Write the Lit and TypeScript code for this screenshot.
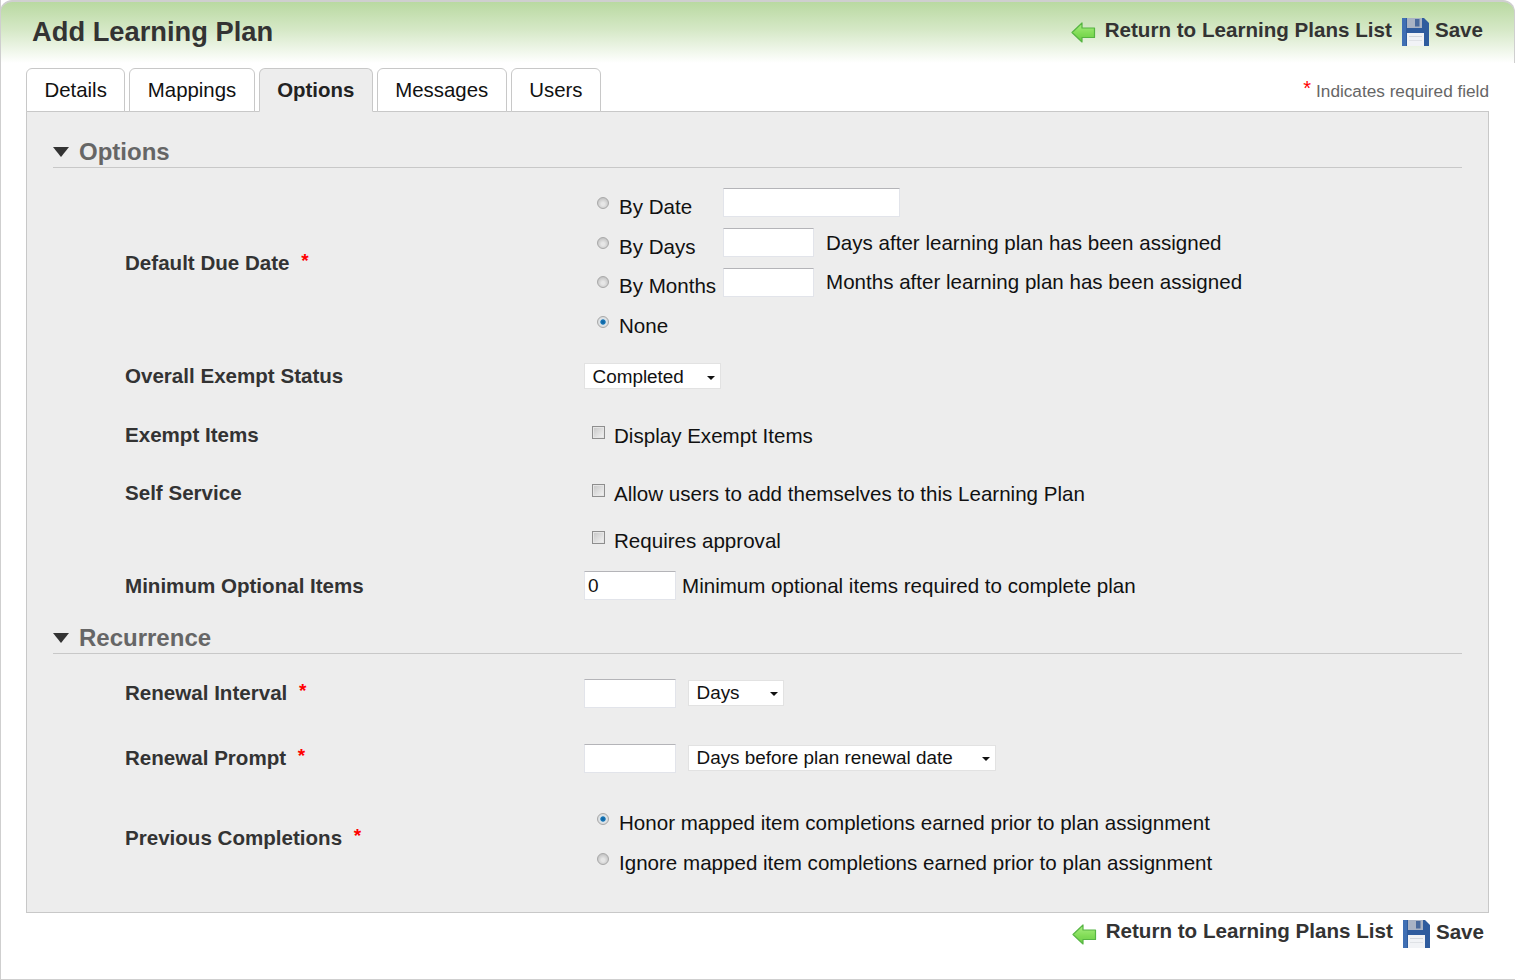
import { LitElement, html, css, svg } from "lit";
import { customElement } from "lit/decorators.js";

let uid = 0;
const arrowIcon = () => {
  const id = `ag${uid++}`;
  return html`<svg class="arrow" width="25" height="21" viewBox="0 0 25 21">
    ${svg`<defs><linearGradient id=${id} x1="0" y1="0" x2="0" y2="1">
      <stop offset="0" stop-color="#a8ee7c"/><stop offset="0.55" stop-color="#7ddc50"/><stop offset="1" stop-color="#62c83c"/>
    </linearGradient></defs>
    <path d="M1 10.5 L11 1 V6 H23.5 V15.5 H11 V20 Z" fill=${`url(#${id})`} stroke="#4fb23a" stroke-width="1.2" stroke-linejoin="round" opacity="0.95"/>`}
  </svg>`;
};
const saveIcon = () => html`<svg class="floppy" width="27" height="28" viewBox="0 0 27 28">
  <path d="M0 0 H22 L27 5 V28 H0 Z" fill="#2f5c9e"/>
  <path d="M0 0 H4 V28 H0 Z" fill="#3f6fb4"/>
  <rect x="5" y="0" width="15" height="10" fill="#a9b3c4"/>
  <rect x="13" y="1" width="4.5" height="7.5" fill="#4a6a9c"/>
  <rect x="5" y="15" width="17" height="13" fill="#f1f3f6"/>
  <rect x="7" y="18" width="13" height="1" fill="#d3d7dd"/>
  <rect x="7" y="22" width="13" height="1" fill="#dfe2e6"/>
</svg>`;

@customElement("app-root")
export class AppRoot extends LitElement {
  static styles = css`
    :host {
      display: block;
      width: 1515px;
      height: 980px;
      font-family: "Liberation Sans", Arial, sans-serif;
      font-size: 20.57px;
      color: #111;
      background: #fff;
    }
    * { box-sizing: border-box; }
    .frame {
      height: 980px;
      border-left: 1px solid #cfcfcf;
      border-bottom: 1px solid #cfcfcf;
      display: flex;
      flex-direction: column;
    }
    .head {
      height: 63px;
      flex: none;
      margin-left: -1px;
      border: 1px solid #cfcfcf;
      border-width: 2px 1px 0;
      border-radius: 12px 12px 0 0;
      background: linear-gradient(#b9d9a1, #d5e8c6 45%, #ffffff 100%);
      display: flex;
      justify-content: space-between;
      padding: 0 31px 0 31px;
    }
    h1 {
      margin: 0;
      font-size: 27.3px;
      font-weight: bold;
      line-height: 60px;
      color: #333;
    }
    .actions {
      display: flex;
      align-items: center;
      font-size: 20.6px;
      font-weight: bold;
      color: #333;
    }
    .head .actions { height: 56px; }
    .arrow { margin: 5px 9px 0 0; flex: none; }
    .floppy { margin: 3px 6px 0 10px; flex: none; }
    .tabrow {
      margin: 5px 26px -1px 25px;
      display: flex;
      justify-content: space-between;
      position: relative;
      z-index: 1;
    }
    .tabs { display: flex; gap: 4px; }
    .tab {
      height: 44px;
      padding: 0 17.5px;
      border: 1px solid #c8c8c8;
      border-radius: 6px 6px 0 0;
      font-size: 20.4px;
      line-height: 43px;
      background: #fff;
      color: #111;
    }
    .tab.active {
      font-weight: bold;
      background: #ededed;
      border-bottom-color: #ededed;
      color: #222;
    }
    .note {
      font-size: 17.2px;
      color: #666;
      line-height: 20px;
      padding-top: 12px;
    }
    .note b {
      color: #f00;
      font-size: 20px;
      font-weight: normal;
      margin-right: 5px;
      position: relative;
      top: -2px;
    }
    .panel {
      margin: 0 26px 0 25px;
      height: 802px;
      flex: none;
      background: #ededed;
      border: 1px solid #c8c8c8;
      padding: 24px 26px 0;
    }
    .sec {
      height: 32px;
      border-bottom: 1px solid #c8c8c8;
      font-size: 24px;
      font-weight: bold;
      line-height: 31px;
      color: #666;
      display: flex;
      align-items: center;
    }
    .tri {
      width: 0;
      height: 0;
      border-left: 8px solid transparent;
      border-right: 8px solid transparent;
      border-top: 10px solid #333;
      margin-right: 10px;
    }
    .row {
      display: flex;
      padding-left: 72px;
    }
    .lab {
      width: 459px;
      flex: none;
      font-weight: bold;
      color: #333;
    }
    .lab i {
      font-style: normal;
      font-weight: bold;
      font-size: 19px;
      color: #f00;
      margin-left: 6px;
      position: relative;
      top: -3px;
    }
    .ctl { flex: 1; }
    .opt { display: flex; height: 40px; }
    .opt.up { margin-top: -1px; }
    .opt.up .txt { margin-top: 2px; }
    .radio {
      appearance: none;
      width: 12px;
      height: 12px;
      margin: 10px 10px 0 13px;
      border-radius: 50%;
      border: 1px solid #a8a8a8;
      background: radial-gradient(circle at 50% 60%, #e6e6e6 20%, #b4b4b4 100%);
      flex: none;
    }
    .radio:checked {
      background: radial-gradient(circle, #0b5f9e 0, #1a78b8 32%, #e0e6ea 44%, #cfcfcf 100%);
    }
    .opt label { line-height: 40px; width: 104px; flex: none; white-space: nowrap; }
    .opt.wide label { width: auto; }
    .txt {
      height: 29px;
      border: 1px solid #e2e4ea;
      border-top-color: #b4b4b8;
      background: #fff;
      font: 19px "Liberation Sans", Arial, sans-serif;
      color: #111;
      padding: 0 3px;
      flex: none;
      outline: none;
      display: block;
    }
    .opt .txt { margin-top: 1px; }
    .w177 { width: 177px; }
    .w91 { width: 91px; }
    .w92 { width: 92px; }
    .suffix { margin-left: 12px; line-height: 32px; white-space: nowrap; }
    .sel {
      height: 26px;
      background: #fff;
      border: 1px solid #e2e2e2;
      display: flex;
      align-items: center;
      justify-content: space-between;
      padding: 0 8px 0 7.5px;
      line-height: 24px;
      font-size: 18.9px;
      flex: none;
    }
    .sel::after {
      content: "";
      width: 0;
      height: 0;
      border-left: 4px solid transparent;
      border-right: 4px solid transparent;
      border-top: 4px solid #111;
      margin: 2px -3px 0 0;
    }
    .check {
      appearance: none;
      width: 13px;
      height: 13px;
      margin: 3px 9px 0 8px;
      border: 1px solid #8e8e8e;
      background: linear-gradient(135deg, #c6c6c6, #f4f4f4);
      box-shadow: inset 0 0 0 1px #e6e6e6;
      flex: none;
    }
    .chk { display: flex; align-items: flex-start; white-space: nowrap; }
    .chk span { margin-top: 1px; }
    .inline { display: flex; align-items: center; gap: 12px; }
    .inline .sel { margin-top: -1px; }
    .inline.tight { gap: 6px; }
    .due { margin-top: 19px; height: 160px; }
    .due .lab { padding-top: 64px; }
    .exempt { margin-top: 15px; height: 28px; align-items: center; }
    .exempt .sel { padding-top: 1px; }
    .disp { margin-top: 33px; height: 28px; }
    .disp .lab { line-height: 24px; }
    .self { margin-top: 30px; height: 80px; }
    .self .lab { line-height: 24px; }
    .self .chk + .chk { margin-top: 22px; }
    .minr { margin-top: 10px; height: 29px; align-items: center; }
    .sec.rec { margin-top: 22px; }
    .ri { margin-top: 25px; height: 29px; align-items: center; }
    .rp { margin-top: 36px; height: 29px; align-items: center; }
    .ri .lab, .rp .lab { padding-bottom: 2px; }
    .pc { margin-top: 30px; height: 80px; }
    .pc .lab { padding-top: 23px; }
    .foot {
      display: flex;
      justify-content: flex-end;
      padding-right: 31px;
    }
    .foot .actions { height: 38px; }
    .foot .t { position: relative; top: -1px; }
    .foot .floppy { margin-top: 4px; }
    .s137 { width: 137px; }
    .s96 { width: 96px; }
    .s308 { width: 308px; }
  `;

  render() {
    return html`<div class="frame">
      <header class="head">
        <h1>Add Learning Plan</h1>
        <div class="actions">${arrowIcon()}<span>Return to Learning Plans List</span>${saveIcon()}<span>Save</span></div>
      </header>
      <div class="tabrow">
        <div class="tabs">
          <div class="tab">Details</div>
          <div class="tab">Mappings</div>
          <div class="tab active">Options</div>
          <div class="tab">Messages</div>
          <div class="tab">Users</div>
        </div>
        <div class="note"><b>*</b>Indicates required field</div>
      </div>
      <main class="panel">
        <div class="sec"><span class="tri"></span>Options</div>

        <div class="row due">
          <div class="lab">Default Due Date <i>*</i></div>
          <div class="ctl">
            <div class="opt"><input class="radio" type="radio" name="due" /><label>By Date</label><input class="txt w177" /></div>
            <div class="opt"><input class="radio" type="radio" name="due" /><label>By Days</label><input class="txt w91" /><span class="suffix">Days after learning plan has been assigned</span></div>
            <div class="opt up"><input class="radio" type="radio" name="due" /><label>By Months</label><input class="txt w91" /><span class="suffix">Months after learning plan has been assigned</span></div>
            <div class="opt"><input class="radio" type="radio" name="due" checked /><label>None</label></div>
          </div>
        </div>

        <div class="row exempt">
          <div class="lab">Overall Exempt Status</div>
          <div class="ctl"><div class="sel s137">Completed</div></div>
        </div>

        <div class="row disp">
          <div class="lab">Exempt Items</div>
          <div class="ctl"><div class="chk"><input class="check" type="checkbox" /><span>Display Exempt Items</span></div></div>
        </div>

        <div class="row self">
          <div class="lab">Self Service</div>
          <div class="ctl">
            <div class="chk"><input class="check" type="checkbox" /><span>Allow users to add themselves to this Learning Plan</span></div>
            <div class="chk"><input class="check" type="checkbox" /><span>Requires approval</span></div>
          </div>
        </div>

        <div class="row minr">
          <div class="lab">Minimum Optional Items</div>
          <div class="ctl inline tight"><input class="txt w92" value="0" /><span>Minimum optional items required to complete plan</span></div>
        </div>

        <div class="sec rec"><span class="tri"></span>Recurrence</div>

        <div class="row ri">
          <div class="lab">Renewal Interval <i>*</i></div>
          <div class="ctl inline"><input class="txt w92" /><div class="sel s96">Days</div></div>
        </div>

        <div class="row rp">
          <div class="lab">Renewal Prompt <i>*</i></div>
          <div class="ctl inline"><input class="txt w92" /><div class="sel s308">Days before plan renewal date</div></div>
        </div>

        <div class="row pc">
          <div class="lab">Previous Completions <i>*</i></div>
          <div class="ctl">
            <div class="opt wide"><input class="radio" type="radio" name="prev" checked /><label>Honor mapped item completions earned prior to plan assignment</label></div>
            <div class="opt wide"><input class="radio" type="radio" name="prev" /><label>Ignore mapped item completions earned prior to plan assignment</label></div>
          </div>
        </div>
      </main>
      <footer class="foot">
        <div class="actions">${arrowIcon()}<span class="t">Return to Learning Plans List</span>${saveIcon()}<span>Save</span></div>
      </footer>
    </div>`;
  }
}
